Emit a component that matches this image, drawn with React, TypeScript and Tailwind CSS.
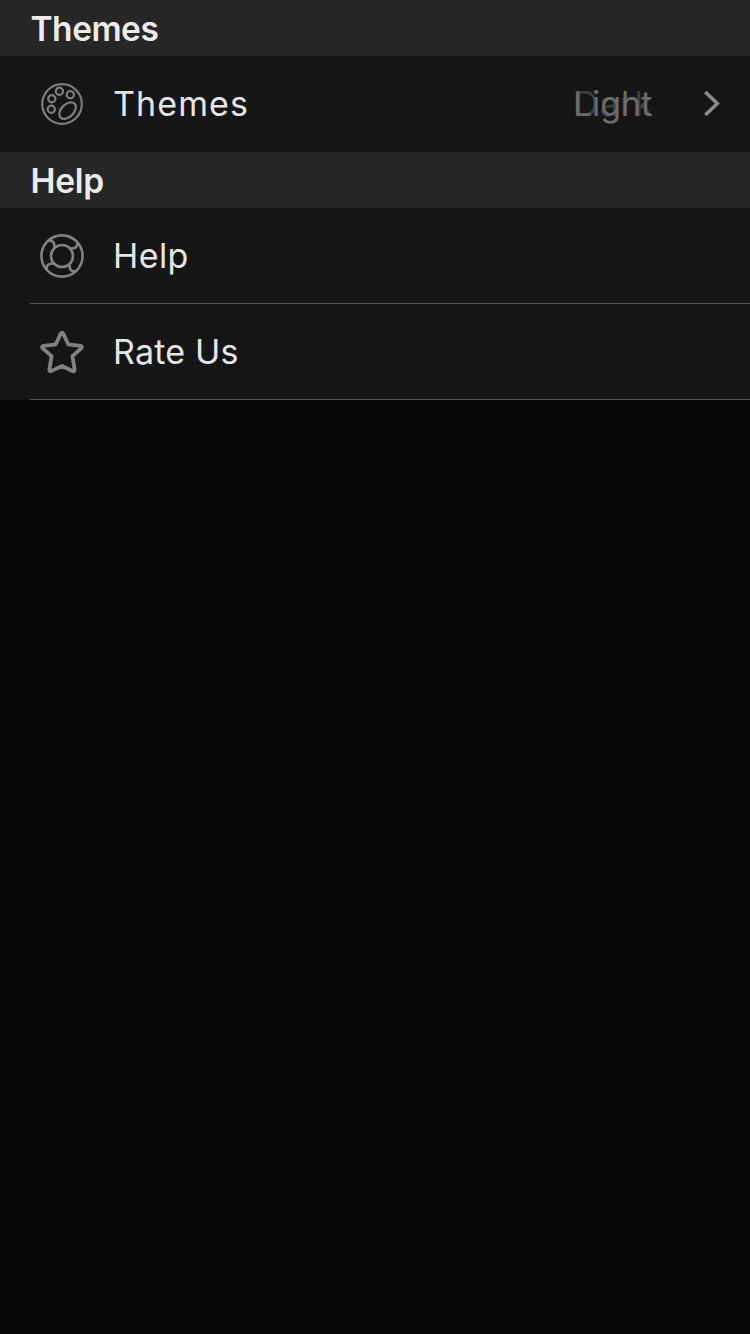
import React from "react";

function PaletteIcon() {
  return (
    <svg className="h-11 w-11 shrink-0" viewBox="0 0 44 44" fill="none" stroke="#7e7e7e" strokeWidth="2.2">
      <circle cx="22" cy="22" r="19.8" />
      <circle cx="11.3" cy="27.2" r="3.6" />
      <circle cx="11.8" cy="16.8" r="3.6" />
      <circle cx="19.4" cy="9.2" r="3.6" />
      <circle cx="30.3" cy="12.8" r="3.6" />
      <ellipse cx="27.6" cy="28.6" rx="9.9" ry="6.3" transform="rotate(-45 27.6 28.6)" />
    </svg>
  );
}

function LifebuoyIcon() {
  return (
    <svg className="h-11 w-11 shrink-0" viewBox="0 0 44 44" fill="none" stroke="#828282" strokeWidth="2.6">
      <circle cx="22" cy="22" r="20.6" />
      <circle cx="22" cy="22" r="11" />
      <path d="M8.6 6.8C12.6 6 15.2 8.8 14.4 14" />
      <path d="M37.2 8.6C38 12.6 35.2 15.2 30 14.4" />
      <path d="M35.4 37.2C31.4 38 28.8 35.2 29.6 30" />
      <path d="M6.8 35.4C6 31.4 8.8 28.8 14 29.6" />
    </svg>
  );
}

function StarIcon() {
  return (
    <svg className="h-11 w-11 shrink-0" viewBox="0 0 44 44" fill="none" stroke="#828282" strokeWidth="3.8" strokeLinejoin="round">
      <path d="M20.5 4Q22 1.4 23.5 4L28.2 14.3L40.4 15.9Q43 16.5 41.2 18.3L32.4 26.1L34.6 39.4Q34.8 42 32.4 40.9L22 36L11.6 40.9Q9.2 42 9.4 39.4L11.6 26.1L2.8 18.3Q1 16.5 3.6 15.9L15.8 14.3Z" />
    </svg>
  );
}

function SectionHeader({ title, className }: { title: string; className: string }) {
  return (
    <h2 className="flex h-14 items-center bg-[#272727] pl-[30.5px] pt-[4px] text-[33.5px] font-semibold leading-none text-[#ebebeb]">
      <span className={className}>{title}</span>
    </h2>
  );
}

function Row({
  icon,
  label,
  labelClass,
  divider = false,
  children,
}: {
  icon: React.ReactNode;
  label: string;
  labelClass: string;
  divider?: boolean;
  children?: React.ReactNode;
}) {
  return (
    <div className="h-24 bg-[#161616] pl-[30px]">
      <div className={`flex h-full items-center pl-[10px] ${divider ? "border-b border-[#555555] pt-px" : ""}`}>
        {icon}
        <span className={`ml-[29px] whitespace-nowrap text-[34px] font-normal leading-[34px] text-[#e6e6e6] ${labelClass}`}>
          {label}
        </span>
        {children}
      </div>
    </div>
  );
}

export default function App() {
  return (
    <main className="h-[1334px] w-[750px] overflow-hidden bg-[#060604] font-['Inter',sans-serif]">
      <SectionHeader title="Themes" className="tracking-[-0.5px]" />
      <Row icon={<PaletteIcon />} label="Themes" labelClass="tracking-[1.1px]">
        <div className="relative ml-auto w-[81px] whitespace-nowrap text-[34px] font-normal leading-[34px]">
          <span className="absolute left-[1px] top-0 tracking-[1.2px] text-[#3e3e3e]">Dark</span>
          <span className="relative tracking-[-0.1px] text-[#6c6c6c]">Light</span>
        </div>
        <svg className="ml-[46px] mr-[26px] h-8 w-6 shrink-0" viewBox="0 0 24 32" fill="none" stroke="#8b8b8b" strokeWidth="3.6">
          <path d="M5.3 4L17.3 15.5L5.3 27" />
        </svg>
      </Row>
      <SectionHeader title="Help" className="tracking-[-0.3px]" />
      <Row icon={<LifebuoyIcon />} label="Help" labelClass="tracking-[0.4px]" divider />
      <Row icon={<StarIcon />} label="Rate Us" labelClass="tracking-[0.2px]" divider />
    </main>
  );
}
